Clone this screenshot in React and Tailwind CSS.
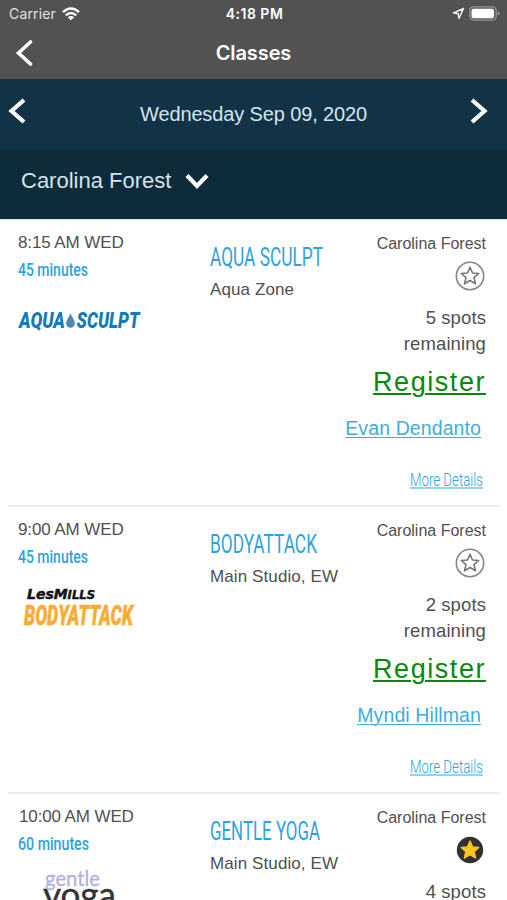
const clases = [
  { id: 1, hora: '8:15 AM WED', duracion: '45 minutes', nombre: 'AQUA SCULPT', sala: 'Aqua Zone', lugares: 5, instructor: 'Evan Dendanto', favorita: false },
  { id: 2, hora: '9:00 AM WED', duracion: '45 minutes', nombre: 'BODYATTACK', sala: 'Main Studio, EW', lugares: 2, instructor: 'Myndi Hillman', favorita: false },
  { id: 3, hora: '10:00 AM WED', duracion: '60 minutes', nombre: 'GENTLE YOGA', sala: 'Main Studio, EW', lugares: 4, instructor: '', favorita: true }
]

const anchoTitulo = { 1: 113, 2: 107, 3: 110 }

// Condensed lettering: SVG text fitted to a given width
function Condensado({ children, ancho, alto, size, peso = 400, subrayado = false }) {
  return (
    <svg width={ancho + 2} height={alto} className="block overflow-visible" fill="#2ea3db">
      <text
        x="0"
        y={alto * 0.75}
        fontFamily="Roboto, sans-serif"
        fontSize={size}
        fontWeight={peso}
        textLength={ancho}
        lengthAdjust="spacingAndGlyphs"
      >
        {children}
      </text>
      {subrayado && <rect x="0" y={alto * 0.75 + 2} width={ancho} height="1" />}
    </svg>
  )
}

function LogoClase({ id }) {
  if (id === 1) {
    return (
      <svg width="140" height="60" className="block" fontFamily="Roboto, sans-serif" fontWeight="900" fontStyle="italic">
        <g fill="#1679b8" fontSize="22.500">
          <text x="1" y="45" textLength="46" lengthAdjust="spacingAndGlyphs">AQUA</text>
          <text x="58.500" y="45" textLength="63" lengthAdjust="spacingAndGlyphs">SCULPT</text>
        </g>
        <path d="M52.500 30c1 4 4.300 6.500 4.300 10.500a4.300 4.300 0 0 1-8.600 0c0-4 3.300-6.500 4.300-10.500z" fill="#4f87ae" />
      </svg>
    )
  }
  if (id === 2) {
    return (
      <svg width="140" height="64" className="block overflow-visible" fontWeight="900" fontStyle="italic">
        <text x="9" y="28.500" fontFamily="'DejaVu Sans', sans-serif" fontSize="14.500" fill="#141414" stroke="#141414" strokeWidth="0.500" textLength="68" lengthAdjust="spacingAndGlyphs">
          LesM<tspan fontSize="12">ILLS</tspan>
        </text>
        <text x="6" y="55" fontFamily="Roboto, sans-serif" fontSize="28" fill="#f7ad35" stroke="#f7ad35" strokeWidth="0.500" textLength="109" lengthAdjust="spacingAndGlyphs">BODYATTACK</text>
      </svg>
    )
  }
  return (
    <svg width="140" height="70" className="block overflow-visible" fontFamily="Lato, sans-serif">
      <text x="27" y="29" fontSize="22" fill="#b5afdd" stroke="#b5afdd" strokeWidth="0.300" textLength="55" lengthAdjust="spacingAndGlyphs">gentle</text>
      <text x="25" y="51" fontSize="36" fill="#333" stroke="#333" strokeWidth="0.400" textLength="73" lengthAdjust="spacingAndGlyphs">yoga</text>
    </svg>
  )
}

function Estrella({ activa }) {
  const puntos = '15,6.200 17.500,12 23.700,12.500 19,16.600 20.500,22.800 15,19.500 9.500,22.800 11,16.600 6.300,12.500 12.500,12'
  return (
    <svg width="30" height="30" viewBox="0 0 30 30" className="block" strokeLinejoin="round">
      <circle cx="15" cy="15" r={activa ? 13.2 : 13.7} fill={activa ? '#303133' : 'white'} stroke={activa ? 'none' : '#858585'} strokeWidth="1.600" />
      <polygon points={puntos} fill={activa ? '#fdc61b' : 'white'} stroke={activa ? '#fdc61b' : '#777'} strokeWidth="1.600" />
    </svg>
  )
}

function Chevron({ d, className }) {
  return (
    <svg viewBox="0 0 24 26" className={className} fill="none" stroke="white">
      <path d={d} />
    </svg>
  )
}

function FilaClase({ clase }) {
  return (
    <div className="ml-2 mr-[7px] h-[287px] shrink-0 border-b-2 border-[#ededed] flex text-[#505050] whitespace-nowrap">
      <div className="w-[202px] shrink-0 pl-2.5 pt-2.5">
        <div className={clase.id === 3 ? 'text-[17px] leading-[26px] pl-px tracking-[-0.12px]' : 'text-[17px] leading-[26px] tracking-[-0.1px]'}>{clase.hora}</div>
        <div className="h-[27px]">
          <Condensado ancho={clase.id === 3 ? 71 : 70} alto={26} size={19} peso={500}>{clase.duracion}</Condensado>
        </div>
        <LogoClase id={clase.id} />
      </div>

      <div className="w-[130px] shrink-0 pt-[23px]">
        <Condensado ancho={anchoTitulo[clase.id]} alto={31} size={25} peso={450}>{clase.nombre}</Condensado>
        <div className="text-[17px] leading-[30px] mt-px tracking-[0.1px]">{clase.sala}</div>
      </div>

      <div className="flex-1 pr-3.5 pt-[11px] flex flex-col items-end">
        <div className="text-base leading-[26px]">Carolina Forest</div>
        <div className="mt-1 mr-px">
          <Estrella activa={clase.favorita} />
        </div>
        <div className="mt-3.5 text-[18.500px] leading-[26px] tracking-[0.1px] text-right">
          {clase.lugares} spots<br />remaining
        </div>
        <a className="text-[27px] leading-[50px] tracking-[1.550px] text-[#0b870b] underline decoration-2 underline-offset-2">Register</a>
        <a className="text-[19.500px] leading-[42px] mr-[5px] tracking-[0.100px] text-[#3caee0] underline decoration-1 underline-offset-2">{clase.instructor}</a>
        {clase.instructor && (
          <div className="mt-3.5 mr-px">
            <Condensado ancho={73} alto={30} size={18.5} peso={300} subrayado>More Details</Condensado>
          </div>
        )}
      </div>
    </div>
  )
}

export default function App() {
  return (
    <div className="w-full h-[900px] overflow-hidden bg-white flex flex-col font-['Liberation_Sans',sans-serif]">
      <header className="h-[79px] shrink-0 bg-[#525252] text-white font-[Inter,sans-serif]">
        <div className="h-[27px] grid grid-cols-3 items-center pl-[9px] pr-[7px]">
          <div className="flex items-center gap-1.5 text-[14px] tracking-[0.15px] text-[#e2e2e2]">
            <span>Carrier</span>
            <svg width="18" height="14" viewBox="0 0 18 14" fill="none" stroke="white" strokeWidth="2.400">
              <path d="M1 5.200Q9-2.200 17 5.200M3.800 8.400Q9 3.600 14.200 8.400" />
              <path d="M9 13.300L5.800 10.300Q9 7.600 12.200 10.300Z" fill="white" stroke="none" />
            </svg>
          </div>
          <div className="text-[14px] font-semibold text-center tracking-[0.5px]">4:18 PM</div>
          <div className="flex items-center justify-end gap-1">
            <svg width="13" height="13" viewBox="0 0 13 13" fill="none" stroke="#eee" strokeWidth="1.500" strokeLinejoin="round">
              <path d="M11.500 1.500L1.500 6l4.700.7.7 4.800z" />
            </svg>
            <svg width="31" height="15" viewBox="0 0 31 15">
              <rect x="0.700" y="0.900" width="26.500" height="13.200" rx="4" fill="#5c5c5c" stroke="#929292" strokeWidth="1.300" />
              <rect x="2.500" y="2.700" width="22.500" height="9.600" rx="2.200" fill="white" />
              <path d="M28.600 5.200q2 .8 2 2.300t-2 2.300z" fill="#929292" />
            </svg>
          </div>
        </div>
        <div className="h-[52px] grid grid-cols-3 items-center pl-3 pr-3">
          <Chevron d="M18.500 2L6.500 13L18.500 24" className="w-6 h-[26px] stroke-[3.6] [stroke-linecap:round]" />
          <h1 className="text-[20px] font-semibold text-center tracking-[-0.1px]">Classes</h1>
        </div>
      </header>

      <div className="h-[71px] shrink-0 bg-[#123345] flex items-center justify-between pl-[5px] pr-4">
        <Chevron d="M19 2L6.500 13L19 24" className="w-6 h-[26px] stroke-[4.2] mb-[7px]" />
        <span className="pl-[11px] text-[20px] tracking-[-0.13px] text-[#d3e4ef] pb-px">Wednesday Sep 09, 2020</span>
        <Chevron d="M5 2L17.500 13L5 24" className="w-6 h-[26px] stroke-[4.2] mb-[7px]" />
      </div>

      <div className="h-[70px] shrink-0 bg-[#0d2b38] border-b border-[#d7e2eb] flex items-center pl-[21px] pb-2 gap-3.5">
        <span className="text-[22px] text-[#d3e4ef]">Carolina Forest</span>
        <Chevron d="M2 7.500L12 18L22 7.500" className="w-6 h-[26px] stroke-[4.2]" />
      </div>

      <main>
        {clases.map((clase) => (
          <FilaClase key={clase.id} clase={clase} />
        ))}
      </main>
    </div>
  )
}
